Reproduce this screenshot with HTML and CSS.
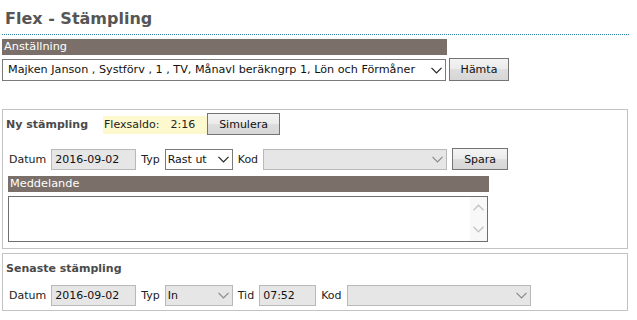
FILE: index.html
```html
<!DOCTYPE html>
<html lang="sv">
<head>
<meta charset="utf-8">
<title>Flex - Stämpling</title>
<link rel="stylesheet" href="styles.css">
</head>
<body>
<div class="page">
  <h1 class="title">Flex - Stämpling</h1>

  <div class="bar bar-emp">Anställning</div>
  <div class="emp-row">
    <span class="sel sel-emp">
      <select><option>Majken Janson , Systförv , 1 , TV, Månavl beräkngrp 1, Lön och Förmåner</option></select>
      <svg width="11" height="7" viewBox="0 0 11 7"><path d="M0.5 0.8 L5.5 5.8 L10.5 0.8" fill="none" stroke="#222" stroke-width="1.2"/></svg>
    </span>
    <button class="btn btn-hamta">Hämta</button>
  </div>

  <section class="box box-new">
    <div class="head-row">
      <span class="box-title">Ny stämpling</span>
      <span class="saldo"><span>Flexsaldo:</span><span class="saldo-val">2:16</span></span>
      <button class="btn btn-sim">Simulera</button>
    </div>
    <div class="field-row">
      <label>Datum</label>
      <input class="inp inp-date" value="2016-09-02" readonly>
      <label>Typ</label>
      <span class="sel sel-typ">
        <select><option>Rast ut</option></select>
        <svg width="11" height="7" viewBox="0 0 11 7"><path d="M0.5 0.8 L5.5 5.8 L10.5 0.8" fill="none" stroke="#222" stroke-width="1.2"/></svg>
      </span>
      <label>Kod</label>
      <span class="sel sel-kod dis">
        <select disabled><option></option></select>
        <svg width="11" height="7" viewBox="0 0 11 7"><path d="M0.5 0.8 L5.5 5.8 L10.5 0.8" fill="none" stroke="#8a8a8a" stroke-width="1.2"/></svg>
      </span>
      <button class="btn btn-spara">Spara</button>
    </div>
    <div class="bar bar-msg">Meddelande</div>
    <div class="msg-wrap">
      <textarea class="msg"></textarea>
      <div class="scroll">
        <svg width="11" height="7" viewBox="0 0 11 7"><path d="M0.5 6.2 L5.5 1.2 L10.5 6.2" fill="none" stroke="#c4c4c4" stroke-width="1.4"/></svg>
        <svg width="11" height="7" viewBox="0 0 11 7"><path d="M0.5 0.8 L5.5 5.8 L10.5 0.8" fill="none" stroke="#c4c4c4" stroke-width="1.4"/></svg>
      </div>
    </div>
  </section>

  <section class="box box-last">
    <div class="head-row">
      <span class="box-title">Senaste stämpling</span>
    </div>
    <div class="field-row">
      <label>Datum</label>
      <input class="inp inp-date" value="2016-09-02" readonly>
      <label>Typ</label>
      <span class="sel sel-typ dis">
        <select disabled><option>In</option></select>
        <svg width="11" height="7" viewBox="0 0 11 7"><path d="M0.5 0.8 L5.5 5.8 L10.5 0.8" fill="none" stroke="#8a8a8a" stroke-width="1.2"/></svg>
      </span>
      <label>Tid</label>
      <input class="inp inp-tid" value="07:52" readonly>
      <label>Kod</label>
      <span class="sel sel-kod dis">
        <select disabled><option></option></select>
        <svg width="11" height="7" viewBox="0 0 11 7"><path d="M0.5 0.8 L5.5 5.8 L10.5 0.8" fill="none" stroke="#8a8a8a" stroke-width="1.2"/></svg>
      </span>
    </div>
  </section>
</div>
</body>
</html>
```

FILE: styles.css
```css
* { box-sizing: border-box; }
html, body { margin: 0; padding: 0; background: #fff; }
body {
  font-family: "DejaVu Sans", Verdana, sans-serif;
  font-size: 11px;
  color: #222;
}
.page {
  width: 627px;
  margin-left: 2px;
}
.title {
  margin: 0;
  padding: 9px 0 5px 3px;
  font-size: 16px;
  line-height: 20px;
  font-weight: bold;
  color: #565656;
  border-bottom: 1px dotted #2f86a8;
}
.bar {
  background: #7a7069;
  color: #fff;
  height: 16px;
  line-height: 16px;
  padding-left: 2px;
  font-size: 11.3px;
}
.bar-emp {
  margin-top: 4px;
  width: 445px;
}
.emp-row {
  display: flex;
  align-items: center;
  gap: 3px;
  margin-top: 3px;
}
.sel {
  position: relative;
  display: inline-flex;
}
.sel select {
  appearance: none;
  -webkit-appearance: none;
  font-family: inherit;
  font-size: 11px;
  color: #111;
  background: #fff;
  border: 1px solid #7a7a7a;
  border-radius: 0;
  height: 21px;
  margin: 0;
  padding: 0 18px 0 2px;
}
.sel svg {
  position: absolute;
  right: 4px;
  top: 7px;
  pointer-events: none;
}
.sel.dis select {
  background: #e6e6e6;
  border-color: #b9b9b9;
  color: #111;
  opacity: 1;
}
.sel-emp select {
  width: 444px;
  height: 22px;
  padding-left: 5px;
  font-size: 11.2px;
}
.sel-emp svg { top: 8px; }
.sel-typ select { width: 68px; }
.sel-kod select { width: 184px; }
.btn {
  font-family: inherit;
  font-size: 11px;
  color: #111;
  border: 1px solid #747474;
  border-radius: 0;
  background: linear-gradient(#f3f3f3, #ebebeb 50%, #dedede 50%, #d6d6d6);
  height: 22px;
  margin: 0;
  padding: 0;
}
.btn-hamta { width: 60px; height: 23px; }
.btn-sim { width: 73px; }
.btn-spara { width: 56px; }

.box {
  border: 1px solid #c3c3c3;
  width: 626px;
  padding: 3px 0 0 3px;
}
.box-new {
  margin-top: 28px;
  padding-bottom: 6px;
}
.box-last {
  margin-top: 4px;
  padding-bottom: 4px;
}
.head-row {
  display: flex;
  align-items: center;
  height: 22px;
}
.box-title {
  font-weight: bold;
  color: #4a4a4a;
  margin-right: 15px;
}
.saldo {
  background: #fdf8cd;
  height: 18px;
  line-height: 18px;
  width: 104px;
  padding-left: 1px;
  margin-top: 1px;
}
.saldo-val { margin-left: 11px; }
.field-row {
  display: flex;
  align-items: center;
  gap: 5px;
  padding-left: 3px;
  height: 22px;
}
.box-new .field-row { margin-top: 13px; }
.box-last .field-row { margin-top: 5px; }
.field-row label { color: #222; }
.inp {
  font-family: inherit;
  font-size: 11px;
  color: #111;
  background: #e6e6e6;
  border: 1px solid #b9b9b9;
  border-radius: 0;
  height: 21px;
  margin: 0;
  padding: 0 3px;
  outline: none;
}
.inp-date { width: 85px; }
.inp-tid { width: 57px; }

.bar-msg {
  margin-top: 6px;
  margin-left: 2px;
  width: 481px;
}
.msg-wrap {
  display: flex;
  margin-top: 4px;
  margin-left: 2px;
  width: 480px;
  height: 46px;
  border: 1px solid #6f6f6f;
  background: #fff;
}
.msg {
  flex: 1;
  border: 0;
  resize: none;
  margin: 0;
  outline: none;
}
.scroll {
  width: 17px;
  background: #f8f8f8;
  display: flex;
  flex-direction: column;
  justify-content: space-between;
  align-items: center;
  padding: 7px 0 8px;
}
```
